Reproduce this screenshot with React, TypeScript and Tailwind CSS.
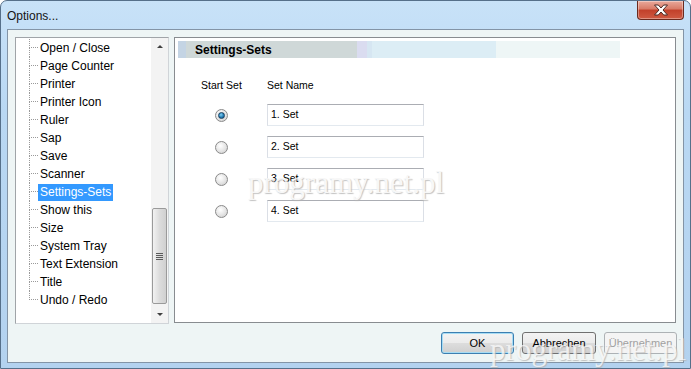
import React from "react";

const ITEMS = [
  "Open / Close",
  "Page Counter",
  "Printer",
  "Printer Icon",
  "Ruler",
  "Sap",
  "Save",
  "Scanner",
  "Settings-Sets",
  "Show this",
  "Size",
  "System Tray",
  "Text Extension",
  "Title",
  "Undo / Redo",
];

const SETS = ["1. Set", "2. Set", "3. Set", "4. Set"];

function TreeItem({ label, last, selected }: { label: string; last: boolean; selected: boolean }) {
  return (
    <div className="flex h-[18px] shrink-0">
      <div className="w-[13px]" />
      {/* tree connector */}
      <div className="flex w-[9px] flex-col">
        <div className="h-[9px] border-b border-l border-dotted border-[#9a9a9a]" />
        <div className={last ? "h-[9px]" : "h-[9px] border-l border-dotted border-[#9a9a9a]"} />
      </div>
      <div className="flex items-center">
        <span
          className={
            selected
              ? "h-[17px] bg-[#3399ff] px-[2px] text-[12px] leading-[17px] text-white"
              : "h-[17px] px-[2px] text-[12px] leading-[17px] text-black"
          }
        >
          {label}
        </span>
      </div>
    </div>
  );
}

function Scrollbar() {
  return (
    <div className="flex w-[17px] flex-col bg-[#f3f3f3]">
      <div className="flex h-[17px] items-center justify-center">
        <div className="h-0 w-0 border-x-[3px] border-b-[3px] border-x-transparent border-b-[#404040]" />
      </div>
      <div className="flex flex-1 flex-col items-center">
        <div className="mt-[153px] flex h-[96px] w-[15px] items-center justify-center rounded-[2px] border border-[#9a9a9a] bg-[linear-gradient(90deg,#f2f2f2,#dcdcdc_50%,#d0d0d0)]">
          <div className="flex flex-col gap-[1px]">
            <div className="h-[1px] w-[7px] bg-[#5a5a5a]" />
            <div className="h-[1px] w-[7px] bg-[#5a5a5a]" />
            <div className="h-[1px] w-[7px] bg-[#5a5a5a]" />
            <div className="h-[1px] w-[7px] bg-[#5a5a5a]" />
          </div>
        </div>
      </div>
      <div className="flex h-[17px] items-center justify-center">
        <div className="h-0 w-0 border-x-[3px] border-t-[3px] border-x-transparent border-t-[#404040]" />
      </div>
    </div>
  );
}

function Radio({ checked }: { checked: boolean }) {
  return (
    <div className="flex h-[13px] w-[13px] items-center justify-center rounded-full border border-[#8a8a8a] bg-[radial-gradient(circle_at_40%_35%,#ffffff,#e4e4e4_55%,#c8c8c8)]">
      {checked && (
        <div className="h-[7px] w-[7px] rounded-full border border-[#163f60] bg-[radial-gradient(circle_at_40%_35%,#7fd0f5,#1f78b0_60%,#124f78)]" />
      )}
    </div>
  );
}

function Button({ label, primary, disabled }: { label: string; primary?: boolean; disabled?: boolean }) {
  const base =
    "flex h-[22px] items-center justify-center rounded-[3px] border text-[11px] bg-[linear-gradient(180deg,#f3f3f3,#ebebeb_50%,#dddddd_50%,#cfcfcf)]";
  if (primary)
    return (
      <div className={`${base} w-[73px] border-[#3c7fb1] text-black shadow-[inset_0_0_0_1px_#a6dcf4]`}>
        {label}
      </div>
    );
  if (disabled)
    return (
      <div className="flex h-[22px] w-[73px] items-center justify-center rounded-[3px] border border-[#adb2b5] bg-[#f4f4f4] text-[11px] text-[#a0a0a0]">
        {label}
      </div>
    );
  return <div className={`${base} w-[74px] border-[#707070] text-black`}>{label}</div>;
}

export default function App() {
  return (
    <div className="relative h-[369px] w-[691px] overflow-hidden bg-white font-['Liberation_Sans',Arial,sans-serif]">
      <div className="flex h-full flex-col rounded-t-[7px] border border-[#56708a] bg-[linear-gradient(180deg,#c8e2f8,#b9d8f3_30%,#b3d2ef)]">
        {/* Title bar */}
        <div className="flex h-[28px] items-start">
          <span className="ml-[6px] mt-[8px] text-[12px] leading-[14px] text-[#141414]">
            Options...
          </span>
          <div className="ml-auto mr-[6px] flex h-[19px] w-[47px] items-center justify-center rounded-b-[4px] border border-t-0 border-[#6b2a1e] bg-[linear-gradient(180deg,#e9a99b,#d87a66_45%,#c2402a_50%,#cf5a42)] shadow-[inset_0_0_0_1px_rgba(255,255,255,0.35)]">
            <svg width="16" height="12" viewBox="0 0 16 12">
              <path
                d="M1.5 1h3.8L8 4 10.7 1h3.8L10 6l4.5 5h-3.8L8 8 5.3 11H1.5L6 6z"
                fill="#ffffff"
                stroke="#4a2a25"
                strokeWidth="1"
                strokeLinejoin="round"
              />
            </svg>
          </div>
        </div>

        {/* Client area */}
        <div className="mx-[6px] mb-[5px] flex flex-1 flex-col border border-[#8394a6] bg-[#eef5f5] pl-[7px] pr-[7px] pt-[7px]">
          <div className="flex">
            {/* Tree */}
            <div className="flex h-[287px] w-[154px] border border-[#a0a4a8] border-b-[#d0d4d8] border-r-[#d0d4d8] bg-white">
              <div className="flex flex-1 flex-col overflow-hidden pt-[1px]">
                {ITEMS.map((item, i) => (
                  <TreeItem key={item} label={item} last={i === ITEMS.length - 1} selected={item === "Settings-Sets"} />
                ))}
              </div>
              <Scrollbar />
            </div>

            {/* Settings panel */}
            <div className="ml-[5px] flex h-[286px] w-[502px] flex-col border border-[#888c90] bg-white">
              <div className="ml-[3px] mt-[3px] flex h-[17px] w-[442px]">
                <div className="w-[8px] bg-[#c4d4e4]" />
                <div className="flex w-[171px] items-center bg-[#cfd8d8] pl-[9px] text-[12px] font-bold text-black">
                  Settings-Sets
                </div>
                <div className="w-[10px] bg-[#dadcf0]" />
                <div className="w-[5px] bg-[#d6e6f2]" />
                <div className="w-[124px] bg-[#dcedf5]" />
                <div className="w-[124px] bg-[#eef6f6]" />
              </div>

              <div className="ml-[26px] mt-[21px] flex flex-col text-[10.5px] text-black">
                <div className="flex h-[13px] items-center leading-[13px]">
                  <span className="w-[66px]">Start Set</span>
                  <span>Set Name</span>
                </div>
                <div className="mt-[12px] flex flex-col gap-[10px]">
                  {SETS.map((s, i) => (
                    <div key={s} className="flex h-[22px] items-center">
                      <div className="flex w-[40px] justify-center">
                        <Radio checked={i === 0} />
                      </div>
                      <div className="ml-[26px] flex h-[22px] w-[157px] items-center border border-[#dbdfe6] border-b-[#e3e9ef] border-t-[#abadb3] pl-[3px]">
                        {s}
                      </div>
                    </div>
                  ))}
                </div>
              </div>
            </div>
          </div>

          {/* Buttons */}
          <div className="-mr-[1px] mt-[8px] flex justify-end gap-[8px]">
            <Button label="OK" primary />
            <Button label="Abbrechen" />
            <Button label="Übernehmen" disabled />
          </div>
        </div>
      </div>

      {/* watermarks */}
      <span className="pointer-events-none absolute left-[248px] top-[167px] font-['Liberation_Serif',serif] text-[31px] leading-[31px] text-[#f6f6f6] opacity-80 [text-shadow:1px_1px_1px_#b4b4b4]">
        programy.net.pl
      </span>
      <span className="pointer-events-none absolute left-[490px] top-[334px] font-['Liberation_Serif',serif] text-[31px] leading-[31px] text-[#f6f6f6] opacity-80 [text-shadow:1px_1px_1px_#b4b4b4]">
        programy.net.pl
      </span>
    </div>
  );
}
